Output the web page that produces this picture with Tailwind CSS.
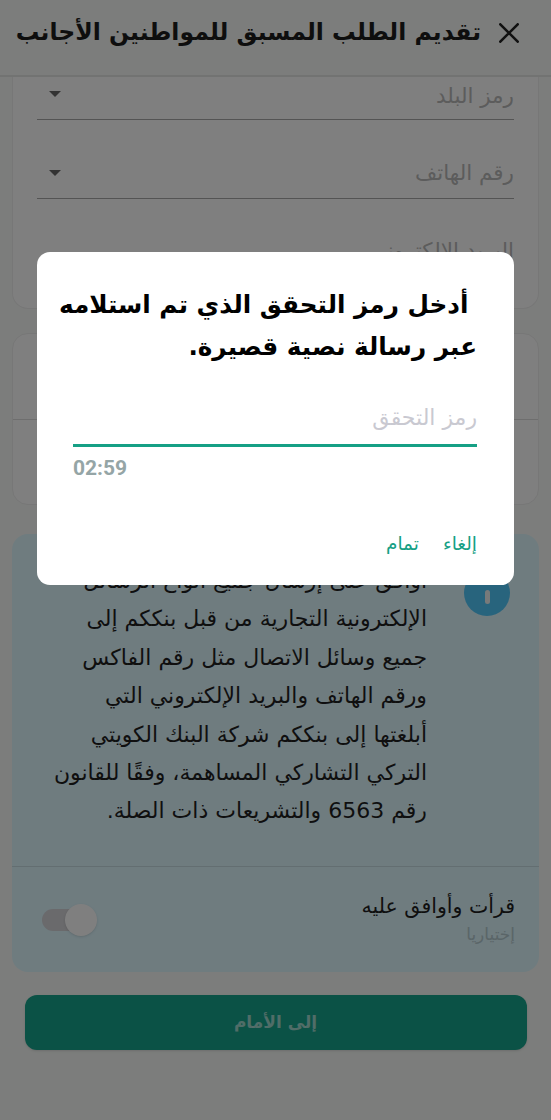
<!DOCTYPE html>
<html lang="ar" dir="rtl">
  <head>
    <meta charset="UTF-8">
    <meta name="viewport" content="width=device-width, initial-scale=1.0">
    <title>تقديم الطلب المسبق</title>
    <script src="https://cdn.jsdelivr.net/npm/@tailwindcss/browser@4"></script>
  </head>

  <body class="bg-[#f8fbf8] font-['DejaVu_Sans',sans-serif]">
    <div class="relative w-[551px] h-[1120px] overflow-hidden">
      <!-- Header -->
      <header class="h-[77px] flex items-center gap-[18px] pr-[32px] pb-[9px] border-b-2 border-[#e4e6e4] bg-[#f8fbf8]">
        <svg class="w-[20px] h-[20px] shrink-0 text-[#222]" viewBox="0 0 20 20" fill="none" stroke="currentColor" stroke-width="2.6" stroke-linecap="round">
          <path d="M1.3 1.3l17.4 17.4M18.7 1.3L1.3 18.7" />
        </svg>
        <h1 class="text-[23.5px] font-bold text-[#1d1d1d] whitespace-nowrap">تقديم الطلب المسبق للمواطنين الأجانب</h1>
      </header>

      <main class="flex flex-col px-3">
        <!-- Contact card, scrolled under the header -->
        <section class="h-[232px] bg-white rounded-b-2xl border border-t-0 border-[#eeeeee] px-6">
          <div class="h-[43px] pb-1 flex items-center justify-between border-b border-[#a8a8a8]">
            <span class="text-[21.5px] text-[#b9b9b9]">رمز البلد</span>
            <span class="w-0 h-0 ml-3 -mt-1 border-x-[6px] border-x-transparent border-t-[6px] border-t-[#666]"></span>
          </div>
          <div class="h-[51px] mt-[28px] flex items-center justify-between border-b border-[#a8a8a8]">
            <span class="text-[21.5px] text-[#b9b9b9]">رقم الهاتف</span>
            <span class="w-0 h-0 ml-3 border-x-[6px] border-x-transparent border-t-[6px] border-t-[#666]"></span>
          </div>
          <div class="mt-[36px] text-[21.5px] text-[#b9b9b9]">البريد الإلكتروني</div>
        </section>

        <!-- Second card, mostly behind the dialog -->
        <section class="h-[172px] mt-6 bg-white rounded-2xl border border-[#eeeeee]">
          <div class="h-[86px] border-b border-[#dddddd]"></div>
        </section>

        <!-- Consent card -->
        <section class="h-[438px] mt-[29px] bg-[#def8ff] rounded-2xl flex flex-col">
          <div class="h-[332px] flex gap-[37px] pr-[29px]">
            <div class="w-[46px] h-[46px] mt-9 shrink-0 rounded-full bg-[#50c8fa] flex items-center justify-center">
              <span class="w-[5px] h-[14px] mt-2 rounded-full bg-[#f0f4f4]"></span>
            </div>
            <p class="pt-[28px] text-[22px] leading-[38.4px] text-[#1f1f1f] whitespace-nowrap">
              أوافق على إرسال جميع أنواع الرسائل<br>
              الإلكترونية التجارية من قبل بنككم إلى<br>
              جميع وسائل الاتصال مثل رقم الفاكس<br>
              ورقم الهاتف والبريد الإلكتروني التي<br>
              أبلغتها إلى بنككم شركة البنك الكويتي<br>
              التركي التشاركي المساهمة، وفقًا للقانون<br>
              رقم 6563 والتشريعات ذات الصلة.
            </p>
          </div>
          <div class="flex-1 border-t border-[#c6dde3] pr-6 pl-[30px] flex items-center justify-between">
            <div class="flex flex-col">
              <span class="text-[20.5px] leading-7 text-[#1f1f1f]">قرأت وأوافق عليه</span>
              <span class="text-[17px] leading-7 text-[#b5cbd0]">إختياريا</span>
            </div>
            <div class="relative w-[50px] h-[22px] rounded-full bg-[#d4d4d8]">
              <span class="absolute -top-[5px] right-[-5px] w-8 h-8 rounded-full bg-white shadow"></span>
            </div>
          </div>
        </section>

        <button class="w-[502px] h-[55px] mt-[23px] self-center rounded-xl bg-[#16a48c] text-[17px] font-bold text-white/60 shadow">إلى الأمام</button>
      </main>

      <!-- Scrim -->
      <div class="absolute inset-0 bg-black/50"></div>

      <!-- Verification dialog -->
      <div class="absolute left-[37px] top-[252px] w-[477px] h-[333px] bg-white rounded-[13px] pl-[36px] pr-[37px] pt-[32px] flex flex-col">
        <h2 class="text-[24.7px] leading-[42px] font-bold text-black whitespace-nowrap">&nbsp;أدخل رمز التحقق الذي تم استلامه<br>عبر رسالة نصية قصيرة.</h2>
        <div class="mt-[33px] h-[46px] text-[22px] text-[#c9c9d1] border-b-[3px] border-[#16a085]">رمز التحقق</div>
        <div class="mt-[6px] text-[21px] font-bold text-[#95a5a6] font-['Roboto'] text-left" dir="ltr">02:59</div>
        <div class="mt-auto mb-[27px] flex gap-[24px] text-[18.5px] text-[#16a085]">
          <button>إلغاء</button>
          <button>تمام</button>
        </div>
      </div>
    </div>
  </body>
</html>
